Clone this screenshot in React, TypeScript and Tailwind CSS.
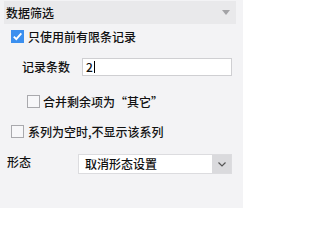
import React from 'react';

const font = { fontFamily: '"Noto Sans CJK SC", "Microsoft YaHei", sans-serif' };

function Check({ checked }: { checked?: boolean }) {
  if (checked) {
    return (
      <span className="w-[13px] h-[13px] bg-[#3b8fef] flex items-center justify-center shrink-0">
        <svg width="11" height="11" viewBox="0 0 11 11">
          <path d="M1.8 5.6 L4.3 8.2 L9.3 2.4" fill="none" stroke="#fff" strokeWidth="1.9" />
        </svg>
      </span>
    );
  }
  return <span className="w-[13px] h-[13px] border border-[#a9a9ad] bg-[#f7f7f9] shrink-0" />;
}

export default function App() {
  return (
    <div className="w-[243px] h-[208px] bg-[#f3f3f5] text-[12px] leading-none font-medium text-[#111] overflow-hidden" style={font}>
      {/* 标题栏 */}
      <div className="ml-[4px] mt-[1px] w-[232px] h-[23px] bg-[#e9e9eb] flex items-center justify-between pl-[2px] pr-[6px]">
        <span>数据筛选</span>
        <svg width="8" height="5" viewBox="0 0 8 5">
          <path d="M0 0 H8 L4 5 Z" fill="#a3a3a6" />
        </svg>
      </div>

      <div className="mt-[6px] ml-[11px] flex items-center gap-[4px] h-[13px]">
        <Check checked />
        <span>只使用前有限条记录</span>
      </div>

      <div className="mt-[15px] flex items-center h-[18px]">
        <span className="pl-[22px] w-[82px]">记录条数</span>
        <div className="w-[150px] h-[18px] bg-white border border-[#cfcfd2] flex items-center pl-[3px]">
          <span>2</span>
          <span className="w-px h-[12px] bg-black ml-[1px]" />
        </div>
      </div>

      <div className="mt-[19px] ml-[27px] flex items-center gap-[3px] h-[13px]">
        <Check />
        <span>合并剩余项为“其它”</span>
      </div>

      <div className="mt-[17px] ml-[11px] flex items-center gap-[4px] h-[13px]">
        <Check />
        <span>系列为空时,不显示该系列</span>
      </div>

      <div className="mt-[16px] flex items-center h-[20px]">
        <span className="pl-[7px] w-[78px] -mt-[5px]">形态</span>
        <div className="w-[154px] h-[20px] bg-white border border-[#dcdcdf] flex items-center">
          <span className="flex-1 pl-[6px]">取消形态设置</span>
          <span className="w-[19px] h-full bg-[#dadadd] flex items-center justify-center">
            <svg width="8" height="5" viewBox="0 0 8 5">
              <path d="M0.5 0.5 L4 4 L7.5 0.5" fill="none" stroke="#555" strokeWidth="1.2" />
            </svg>
          </span>
        </div>
      </div>
    </div>
  );
}
